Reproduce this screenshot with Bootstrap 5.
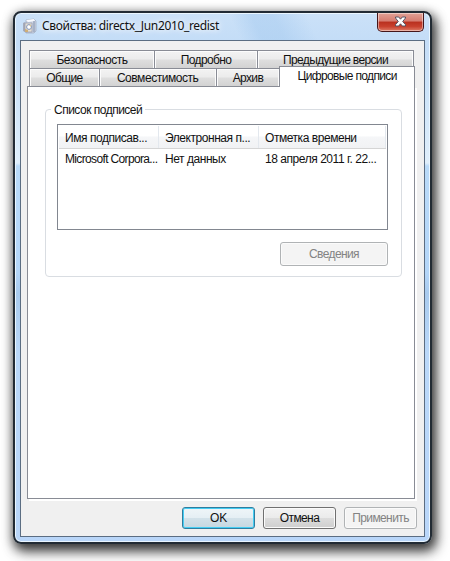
<!DOCTYPE html>
<html lang="ru">
<head>
<meta charset="utf-8">
<title>Свойства: directx_Jun2010_redist</title>
<link href="https://cdn.jsdelivr.net/npm/bootstrap@5.3.0/dist/css/bootstrap.min.css" rel="stylesheet">
<style>
body{background:#fff;font-family:"Liberation Sans",Arial,sans-serif;font-size:12px;line-height:14px;color:#111;letter-spacing:-.45px;width:450px;height:561px;padding:11px 0 0 13px}
.win{width:419px;height:533px;border:2px solid #222b34;border-radius:8px;padding:0 5px 5px;
background:linear-gradient(65deg,transparent 0 205px,#9bc4ed60 225px 245px,transparent 275px) 0 0/100% 28px no-repeat,linear-gradient(180deg,#cbe1f8 0,#c4ddf7 28px,#cde4f9 80px,#e0effb 150px,#b9daf8 153px,#b4d6f8 260px,#a9cbee 280px,#bad8f9 340px,#b9d6f9 100%);
box-shadow:inset 0 0 0 1px #eaf6ff,2px 4px 11px 1px #000000a8,3px 7px 14px 1px #00000070}
.titlebar{height:27px;padding-left:2px}
.title{font-family:"Noto Sans","Open Sans",sans-serif;font-size:12px;line-height:16px;letter-spacing:-.35px;padding:5px 0 0 5px;text-shadow:0 0 5px #fff,0 0 8px #fff}
.appicon{width:15px;height:16px;margin-top:5px}
.closebtn{width:47px;height:19px;margin-right:1px;padding:0 0 2px;border:1px solid #45161a;border-top:0;border-radius:0 0 5px 5px;background:linear-gradient(#e2a297 0,#d67c70 45%,#b9301f 50%,#c8412e 75%,#de7d68 100%);box-shadow:inset 0 0 0 1px #ffffff70}
.client{height:497px;background:#f0f0f0;border:1px solid #5b6d82;padding:9px 7px 0 6px}
.tabs{padding:0 2px;letter-spacing:-.65px}
.tabs .nav-link{border:1px solid #898c95;border-bottom:0;border-radius:0;color:#111;height:18px;padding:2px 0 0;line-height:14px;background:linear-gradient(#f3f3f3,#ececec 45%,#dedede 55%,#d2d2d2);box-shadow:inset 1px 1px #fcfcfc,inset -1px 0 #fcfcfc}
.tabs .nav-item+.nav-item .nav-link{margin-left:-1px}
.t1{width:126px}.t2{width:103px}.t3{width:156px}.t4{width:71px}.t5{width:117px}.t6{width:64px}.t7{width:135px}
.t1,.t5{letter-spacing:-.45px}
.tabs .nav-link.active{height:21px;margin-top:-2px;margin-bottom:-1px;background:#fff;padding-top:2px;position:relative;z-index:2;box-shadow:none}
.page{width:388px;height:413px;background:#fff;border:1px solid #898c95;box-shadow:2px 2px #fff;padding:14px 13px 0 17px}
.group{width:357px;height:168px;border:1px solid #d9dde2;border-radius:4px;margin-top:8px;padding-left:11px}
.grouplegend{margin:-8px 0 0 -6px;height:16px;line-height:16px;padding:0 3px;background:#fff;letter-spacing:-.5px}
.list{width:331px;height:106px;border:1px solid #828790;background:#fff;margin-top:6px;padding:1px}
.listhead{width:327px;height:23px;border-bottom:1px solid #d5d5d5;background:linear-gradient(#fff 45%,#f5f6f8 50%,#f1f2f4)}
.listhead>div{border-right:1px solid #e3e8ee;padding-top:5px}
.cell{padding-left:6px;white-space:nowrap}
.c1{width:100px}.c2{width:100px}.c3{width:127px}
.listrow{padding-top:3px}
.listrow .c1{letter-spacing:-.65px}
.dlg{font-size:12px;line-height:14px;letter-spacing:-.6px;padding:0;border:1px solid #707070;border-radius:3px;color:#111;width:73px;height:22px;background:linear-gradient(#f3f3f3,#ebebeb 48%,#dcdcdc 52%,#cfcfcf);box-shadow:inset 0 0 0 1px #fbfbfb}
.dlg:disabled{opacity:1;background:#f4f4f4;border-color:#b0b3b5;color:#838383;box-shadow:inset 0 0 0 1px #fbfbfb}
.dlg.main{border-color:#2f7d9f;letter-spacing:-.2px;background:linear-gradient(#eff5f8,#e5eff4 48%,#d2e1e9 52%,#c6d7e0);box-shadow:inset 0 0 0 1px #45cdf3}
.dlg.details{width:108px;height:24px;margin:12px 0 0 223px;letter-spacing:-.6px}
.actions{margin-top:8px;gap:8px}
</style>
<script src="https://cdn.jsdelivr.net/npm/bootstrap@5.3.0/dist/js/bootstrap.bundle.min.js"></script>
</head>
<body class="overflow-hidden">
<main class="win">
 <header class="titlebar d-flex align-items-start">
  <svg class="appicon" viewBox="0 0 15 16"><path d="M4 2l8-1 2 2v10l-2 2H4z" fill="#cbd3e2" stroke="#9da9bd" stroke-width=".7"/><path d="M4 2l8-1 1 2-7 1z" fill="#f8faff"/><path d="M12 3v11" stroke="#8290ab"/><path d="M1 5l2-1v10l-2-1z" fill="#a8acba"/><path d="M3 5h7v9H3z" fill="#e5dfd4" stroke="#929aaf" stroke-width=".7"/><circle cx="7" cy="9" r="2.4" fill="#fff" stroke="#8295b9"/><path d="M3 11l3 1v2H3z" fill="#cfae77"/><path d="M7 7h2v2z" fill="#dfc68c"/></svg>
  <div class="title">Свойства: directx_Jun2010_redist</div>
  <button class="closebtn btn ms-auto d-flex align-items-center justify-content-center" aria-label="Закрыть"><svg width="13" height="11" viewBox="0 0 13 11"><path d="M1.5 1h3.2l1.8 2.2L8.3 1h3.2v1L8.7 5.5l2.8 3.2V10H8.3L6.5 7.8 4.7 10H1.5V8.7l2.8-3.2L1.5 2z" fill="#fff" stroke="#545465"/></svg></button>
 </header>
 <section class="client">
  <ul class="nav flex-nowrap tabs text-center">
   <li class="nav-item t1"><a class="nav-link">Безопасность</a></li><li class="nav-item t2"><a class="nav-link">Подробно</a></li><li class="nav-item t3"><a class="nav-link">Предыдущие версии</a></li>
  </ul>
  <ul class="nav flex-nowrap tabs text-center">
   <li class="nav-item t4"><a class="nav-link">Общие</a></li><li class="nav-item t5"><a class="nav-link">Совместимость</a></li><li class="nav-item t6"><a class="nav-link">Архив</a></li><li class="nav-item t7"><a class="nav-link active">Цифровые подписи</a></li>
  </ul>
  <div class="page">
   <div class="group">
    <div class="grouplegend d-table">Список подписей</div>
    <div class="list">
     <div class="listhead d-flex"><div class="cell c1">Имя подписав...</div><div class="cell c2">Электронная п...</div><div class="cell c3">Отметка времени</div></div>
     <div class="listrow d-flex"><div class="cell c1">Microsoft Corpora...</div><div class="cell c2">Нет данных</div><div class="cell c3">18 апреля 2011 г. 22...</div></div>
    </div>
    <button class="btn dlg details d-block" disabled>Сведения</button>
   </div>
  </div>
  <footer class="actions d-flex justify-content-end"><button class="btn dlg main">OK</button><button class="btn dlg">Отмена</button><button class="btn dlg" disabled>Применить</button></footer>
 </section>
</main>
</body>
</html>
